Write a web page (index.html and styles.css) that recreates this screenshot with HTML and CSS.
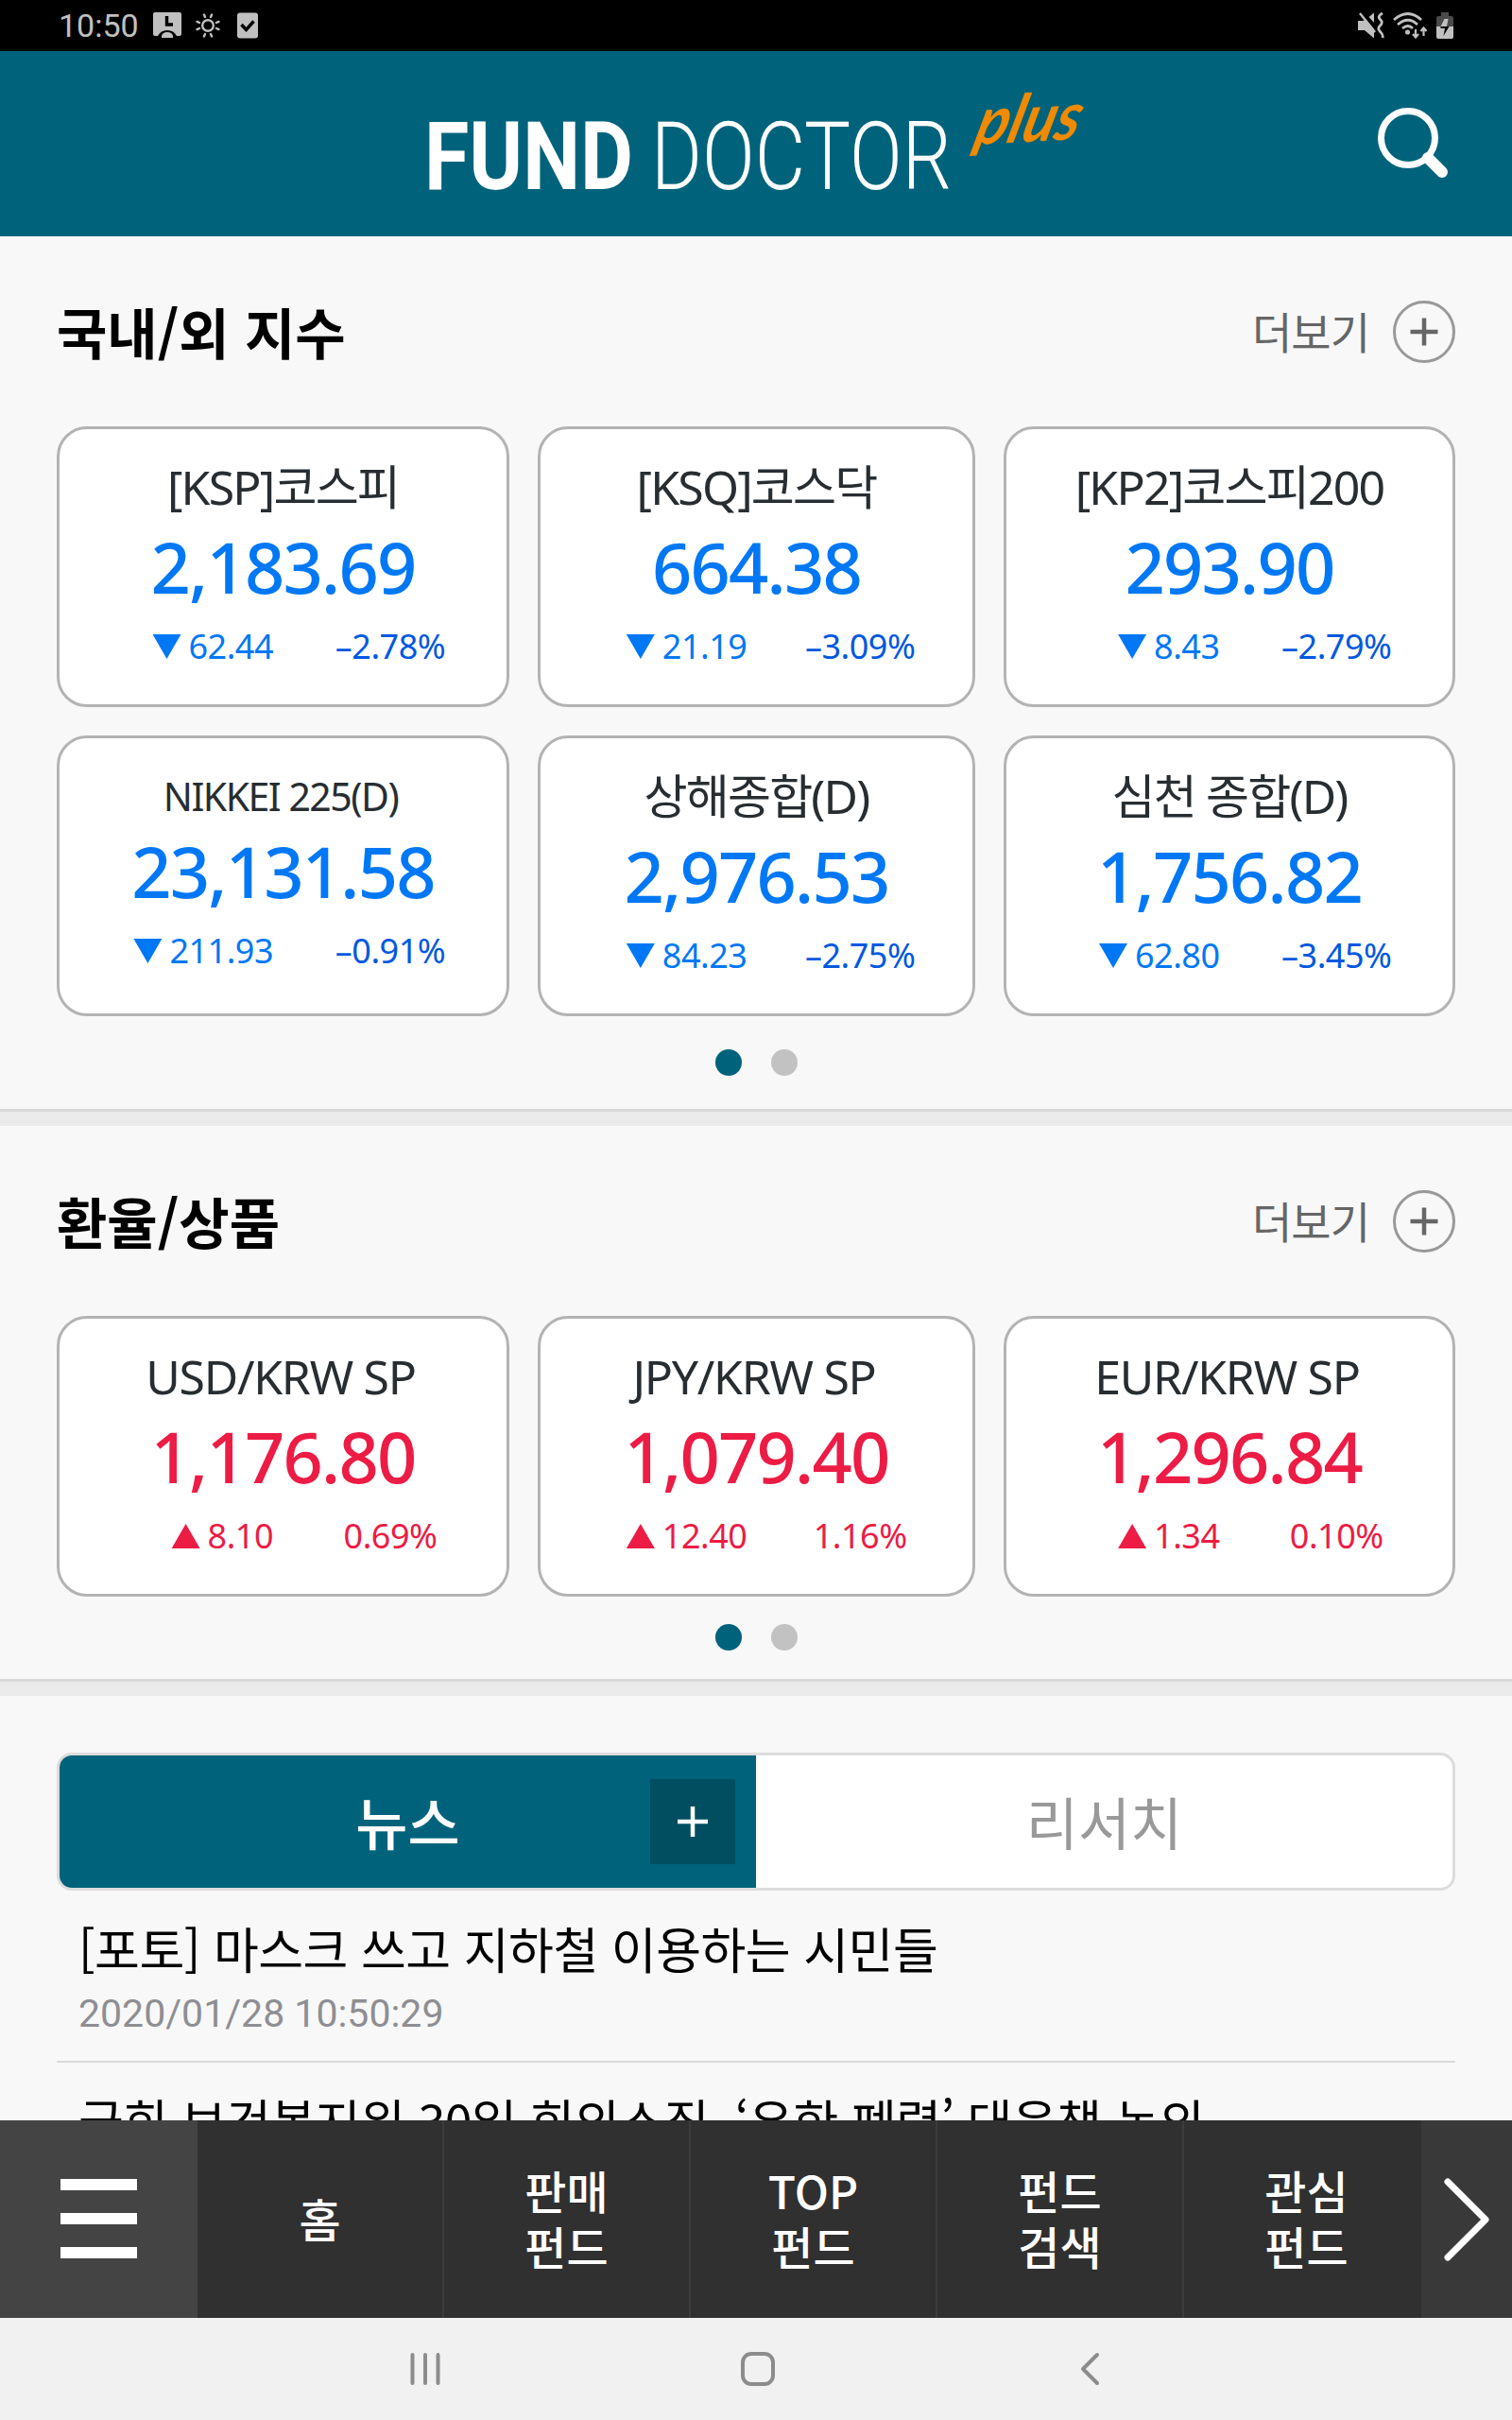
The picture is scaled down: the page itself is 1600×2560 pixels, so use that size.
FILE: index.html
```html
<!DOCTYPE html>
<html lang="ko">
<head>
    <meta charset="UTF-8">
    <meta name="viewport" content="width=device-width, initial-scale=1.0">
    <title>FUND DOCTOR plus</title>
    <link rel="stylesheet" href="styles.css">
</head>
<body>
    <div class="status-bar">
        <div class="status-left">
            <span class="time">10:50</span>
            <svg class="icon-alarm" width="30" height="28" viewBox="0 0 30 28">
                <path fill="#c0c0c0" d="M2 0h26q2 0 2 2v21q0 2-2 2h-3q-3-6-10-6t-10 6H2q-2 0-2-2V2q0-2 2-2z"/>
                <path fill="none" stroke="#000" stroke-width="3.4" d="M14.5 4v9h6.5"/>
                <path fill="#c0c0c0" d="M9 27v-2q1-4 6-4t6 4v2z"/>
            </svg>
            <svg class="icon-sun" width="26" height="26" viewBox="0 0 26 26" fill="none" stroke="#c0c0c0" stroke-width="2.4" stroke-linecap="round">
                <circle cx="13" cy="13" r="5.8"/>
                <path d="M10 4L8.900 1.500M16 4l1.100-2.500M22 10l2.500-1.100M22 16l2.500 1.100M16 22l1.100 2.500M10 22l-1.100 2.500M4 16l-2.500 1.100M4 10L1.500 8.900"/>
            </svg>
            <svg class="icon-check" width="22" height="28" viewBox="0 0 22 28">
                <rect width="22" height="27" y="0.500" rx="3" fill="#c0c0c0"/>
                <path fill="none" stroke="#000" stroke-width="3.400" d="M4.500 13l5 5.500 8-9"/>
            </svg>
        </div>
        <div class="status-right">
            <svg width="28" height="28" viewBox="0 0 28 28">
                <path fill="#c0c0c0" d="M0 9h6l2-2 9 11v9.500L7 19H0zM11.500 5L17 .5V11z"/>
                <path fill="none" stroke="#c0c0c0" stroke-width="2.4" d="M2 1l16 20"/>
                <path fill="none" stroke="#c0c0c0" stroke-width="2.8" d="M26 1q-6 3.300-2.500 6.500t0 6.500q-3.500 3.300 0 6.500t2.500 6.500"/>
            </svg>
            <svg width="37" height="28" viewBox="0 0 37 28" fill="none" stroke="#c0c0c0" stroke-width="2.700">
                <path d="M1 8q15-13 29 0M5 13q11-9.500 21 0M10 17q6-5 11 0"/>
                <circle cx="15.500" cy="21" r="1.200"/>
                <path stroke-width="2.200" d="M24 18v8M21 23l3 3.500 3-3.500M32.500 25v-8M29.500 20l3-3.500 3 3.500"/>
            </svg>
            <svg width="18" height="28" viewBox="0 0 18 28">
                <path fill="#4a4a4a" d="M5 0h8v4h3q2 0 2 2v9H0V6q0-2 2-2h3z"/>
                <path fill="#c0c0c0" d="M0 15h18v11q0 2-2 2H2q-2 0-2-2z"/>
                <path fill="#c0c0c0" d="M8.500 7h4L11 15H4.500z"/>
                <path fill="#000" d="M4.500 15h9L7.500 25l1.500-8H4.500z"/>
            </svg>
        </div>
    </div>

    <header class="header">
        <svg class="logo" width="720" height="110" viewBox="0 0 720 110">
            <text class="logo-fund" x="3" y="87" textLength="221" lengthAdjust="spacingAndGlyphs">FUND</text>
            <text class="logo-doctor" x="243" y="87" textLength="318" lengthAdjust="spacingAndGlyphs">DOCTOR</text>
            <text class="logo-plus" transform="translate(583 40) rotate(-3) skewX(-18)" textLength="110" lengthAdjust="spacingAndGlyphs">plus</text>
        </svg>
        <svg class="search" width="76" height="76" viewBox="0 0 76 76" fill="none" stroke="#fff">
            <circle cx="32" cy="32" r="28.500" stroke-width="7"/>
            <path d="M53 53l15 15" stroke-width="12" stroke-linecap="round"/>
        </svg>
    </header>

    <main class="content">
        <section class="section">
            <div class="section-head">
                <h2>국내/외 지수</h2>
                <a class="more"><span>더보기</span>
                    <svg width="66" height="66" viewBox="0 0 66 66" fill="none"><circle cx="33" cy="33" r="31.500" stroke="#999" stroke-width="3"/><path d="M18.500 33h29M33 18.500v29" stroke="#666" stroke-width="4.500"/></svg>
                </a>
            </div>
            <div class="cards">
                <div class="card down">
                    <div class="name">[KSP]코스피</div>
                    <div class="value">2,183.69</div>
                    <div class="change"><span class="diff"><i></i>62.44</span><span class="rate">–2.78%</span></div>
                </div>
                <div class="card down">
                    <div class="name">[KSQ]코스닥</div>
                    <div class="value">664.38</div>
                    <div class="change"><span class="diff"><i></i>21.19</span><span class="rate">–3.09%</span></div>
                </div>
                <div class="card down">
                    <div class="name">[KP2]코스피200</div>
                    <div class="value">293.90</div>
                    <div class="change"><span class="diff"><i></i>8.43</span><span class="rate">–2.79%</span></div>
                </div>
                <div class="card down">
                    <div class="name small">NIKKEI 225(D)</div>
                    <div class="value">23,131.58</div>
                    <div class="change"><span class="diff"><i></i>211.93</span><span class="rate">–0.91%</span></div>
                </div>
                <div class="card down">
                    <div class="name">상해종합(D)</div>
                    <div class="value">2,976.53</div>
                    <div class="change"><span class="diff"><i></i>84.23</span><span class="rate">–2.75%</span></div>
                </div>
                <div class="card down">
                    <div class="name">심천 종합(D)</div>
                    <div class="value">1,756.82</div>
                    <div class="change"><span class="diff"><i></i>62.80</span><span class="rate">–3.45%</span></div>
                </div>
            </div>
            <div class="dots"><span class="dot active"></span><span class="dot"></span></div>
        </section>

        <section class="section exchange">
            <div class="section-head">
                <h2>환율/상품</h2>
                <a class="more"><span>더보기</span>
                    <svg width="66" height="66" viewBox="0 0 66 66" fill="none"><circle cx="33" cy="33" r="31.500" stroke="#999" stroke-width="3"/><path d="M18.500 33h29M33 18.500v29" stroke="#666" stroke-width="4.500"/></svg>
                </a>
            </div>
            <div class="cards">
                <div class="card up">
                    <div class="name">USD/KRW SP</div>
                    <div class="value">1,176.80</div>
                    <div class="change"><span class="diff"><i></i>8.10</span><span class="rate">0.69%</span></div>
                </div>
                <div class="card up">
                    <div class="name">JPY/KRW SP</div>
                    <div class="value">1,079.40</div>
                    <div class="change"><span class="diff"><i></i>12.40</span><span class="rate">1.16%</span></div>
                </div>
                <div class="card up">
                    <div class="name">EUR/KRW SP</div>
                    <div class="value">1,296.84</div>
                    <div class="change"><span class="diff"><i></i>1.34</span><span class="rate">0.10%</span></div>
                </div>
            </div>
            <div class="dots"><span class="dot active"></span><span class="dot"></span></div>
        </section>

        <section class="news">
            <div class="tabs">
                <div class="tab active">뉴스
                    <span class="tab-more"><svg width="32" height="32" viewBox="0 0 32 32"><path d="M0 16h32M16 0v32" stroke="#fff" stroke-width="4.500"/></svg></span>
                </div>
                <div class="tab">리서치</div>
            </div>
            <ul class="news-list">
                <li>
                    <p class="news-title">[포토] 마스크 쓰고 지하철 이용하는 시민들</p>
                    <p class="news-date">2020/01/28 10:50:29</p>
                </li>
                <li>
                    <p class="news-title">국회 보건복지위 30일 회의소집, ‘우한 폐렴’ 대응책 논의</p>
                </li>
            </ul>
        </section>
    </main>

    <nav class="bottom-menu">
        <div class="hamburger"><span></span><span></span><span></span></div>
        <div class="menu-item">홈</div>
        <div class="menu-item">판매<br>펀드</div>
        <div class="menu-item">TOP<br>펀드</div>
        <div class="menu-item">펀드<br>검색</div>
        <div class="menu-item">관심<br>펀드</div>
        <div class="menu-next">
            <svg width="48" height="88" viewBox="0 0 48 88" fill="none" stroke="#fff" stroke-width="7" stroke-linecap="round" stroke-linejoin="round"><path d="M4 4l40 40L4 84"/></svg>
        </div>
    </nav>

    <div class="android-nav">
        <svg width="36" height="36" viewBox="0 0 36 36" stroke="#8c8c8c" stroke-width="4" stroke-linecap="round"><path d="M4.500 3v30M18 3v30M31.500 3v30"/></svg>
        <svg width="36" height="36" viewBox="0 0 36 36" fill="none" stroke="#8c8c8c" stroke-width="4"><rect x="2" y="2" width="32" height="32" rx="9"/></svg>
        <svg width="36" height="36" viewBox="0 0 36 36" fill="none" stroke="#8c8c8c" stroke-width="4" stroke-linecap="round" stroke-linejoin="round"><path d="M25 3L10 18l15 15"/></svg>
    </div>
</body>
</html>
```
FILE: styles.css
```css
* {
    box-sizing: border-box;
}
body {
    margin: 0;
    width: 1600px;
    height: 2560px;
    display: flex;
    flex-direction: column;
    overflow: hidden;
    background-color: #f8f8f8;
    font-family: "Noto Sans CJK KR", sans-serif;
    color: #000;
}
h2, p, ul {
    margin: 0;
    padding: 0;
}
svg {
    display: block;
    flex: none;
}

/* status bar */
.status-bar {
    flex: none;
    height: 54px;
    padding: 0 62px 0 62px;
    display: flex;
    justify-content: space-between;
    align-items: center;
    background-color: #000;
}
.status-left, .status-right {
    display: flex;
    align-items: center;
}
.status-right {
    gap: 9px;
}
.time {
    font-family: Roboto, sans-serif;
    font-size: 34px;
    line-height: 54px;
    color: #c0c0c0;
}
.icon-alarm {
    margin-left: 15px;
}
.icon-sun {
    margin-left: 15px;
}
.icon-check {
    margin-left: 18px;
}

/* header */
.header {
    flex: none;
    height: 196px;
    padding: 0 66px 0 446px;
    display: flex;
    align-items: center;
    justify-content: space-between;
    background-color: #00637b;
}
.logo {
    margin-top: 31px;
    overflow: visible;
}
.logo text {
    font-family: Roboto, sans-serif;
    font-size: 101px;
    fill: #fff;
}
.logo .logo-fund {
    font-weight: 700;
}
.logo .logo-doctor {
    font-weight: 300;
}
.logo .logo-plus {
    font-family: Lato, sans-serif;
    font-size: 70px;
    font-style: italic;
    font-weight: 700;
    fill: #f08a00;
}

/* sections */
.content {
    flex: 1;
    min-height: 0;
    overflow: hidden;
}
.section {
    height: 941px;
    padding: 68px 60px 0;
    border-bottom: 15px solid #eaeaea;
    box-shadow: inset 0 -3px 0 #d9d9d9;
}
.section.exchange {
    height: 603px;
}
.section-head {
    height: 66px;
    display: flex;
    justify-content: space-between;
    align-items: center;
}
h2 {
    font-size: 58px;
    font-weight: 700;
    line-height: 64px;
    padding-bottom: 2px;
}
.more {
    display: flex;
    align-items: center;
    gap: 25px;
    font-size: 46px;
    letter-spacing: -1px;
    line-height: 62px;
    color: #666;
}
.more span {
    padding-bottom: 4px;
}
.cards {
    margin-top: 67px;
    display: grid;
    grid-template-columns: 479px 463px 478px;
    justify-content: space-between;
    row-gap: 30px;
}
.card {
    height: 297px;
    padding-top: 25px;
    border: 3px solid #b3b3b3;
    border-radius: 32px;
    background-color: #fff;
    font-family: "Noto Sans", "Noto Sans CJK KR", sans-serif;
    text-align: center;
    white-space: nowrap;
}
.name {
    font-size: 50px;
    line-height: 72px;
    letter-spacing: -1.8px;
    color: #272d31;
}
.exchange .name {
    padding-right: 5px;
    letter-spacing: -1.3px;
}
.name.small {
    padding-top: 5px;
    padding-right: 5px;
    font-size: 41px;
    line-height: 62px;
    letter-spacing: -1.5px;
}
.value {
    font-size: 74px;
    font-weight: 500;
    line-height: 97px;
    letter-spacing: -1.8px;
}
.change {
    margin-top: 12px;
    display: flex;
    font-size: 36px;
    line-height: 48px;
    letter-spacing: -0.5px;
}
.diff {
    width: 48%;
    padding-right: 1px;
    display: flex;
    justify-content: flex-end;
    align-items: center;
    gap: 8px;
}
.rate {
    flex: 1;
}
.diff i {
    width: 30px;
    height: 26px;
    background-color: currentColor;
}
.down {
    color: #0078f5;
}
.down .rate {
    color: #0058e0;
}
.down i {
    clip-path: polygon(0 0, 100% 0, 50% 100%);
}
.up {
    color: #ec1c45;
}
.up i {
    clip-path: polygon(0 100%, 100% 100%, 50% 0);
}
.dots {
    margin-top: 35px;
    display: flex;
    justify-content: center;
    gap: 31px;
}
.exchange .dots {
    margin-top: 29px;
}
.dot {
    width: 28px;
    height: 28px;
    border-radius: 50%;
    background-color: #c2c2c2;
}
.dot.active {
    background-color: #00637b;
}

/* news */
.news {
    padding: 60px 60px 0;
}
.tabs {
    height: 146px;
    display: flex;
    border: 3px solid #dcdcdc;
    border-radius: 16px;
    background-color: #fff;
    overflow: hidden;
}
.tab {
    flex: 1;
    position: relative;
    font-size: 60px;
    line-height: 137px;
    text-align: center;
    color: #999;
}
.tab.active {
    background-color: #00637b;
    color: #fff;
    font-weight: 500;
}
.tab-more {
    position: absolute;
    top: 25px;
    right: 22px;
    width: 90px;
    height: 90px;
    display: flex;
    align-items: center;
    justify-content: center;
    background-color: #004e60;
}
.news-list {
    list-style: none;
}
.news-list li {
    height: 182px;
    padding: 23px 23px 0;
    border-bottom: 2px solid #dadada;
}
.news-title {
    font-size: 52px;
    line-height: 76px;
    letter-spacing: -0.5px;
    white-space: nowrap;
}
.news-date {
    font-family: Roboto, sans-serif;
    font-size: 41px;
    line-height: 62px;
    color: #8e8e93;
}

/* bottom menu */
.bottom-menu {
    flex: none;
    height: 209px;
    display: flex;
    background-color: #303030;
    color: #fff;
}
.hamburger {
    width: 209px;
    padding-left: 64px;
    padding-bottom: 2px;
    display: flex;
    flex-direction: column;
    justify-content: center;
    gap: 24px;
    background-color: #444;
}
.hamburger span {
    width: 81px;
    height: 12px;
    background-color: #fff;
}
.menu-item {
    width: 261px;
    padding-bottom: 3px;
    display: flex;
    align-items: center;
    justify-content: center;
    border-right: 2px solid #3c3c3c;
    font-size: 48px;
    font-weight: 500;
    line-height: 59px;
    text-align: center;
}
.menu-item:nth-child(6) {
    width: 251px;
    padding-left: 8px;
    border-right: none;
}
.menu-next {
    flex: 1;
    display: flex;
    align-items: center;
    justify-content: center;
    background-color: #393939;
}

.android-nav {
    flex: none;
    height: 108px;
    padding-left: 4px;
    display: flex;
    align-items: center;
    justify-content: center;
    gap: 316px;
    background-color: #f1f1f1;
}
```
